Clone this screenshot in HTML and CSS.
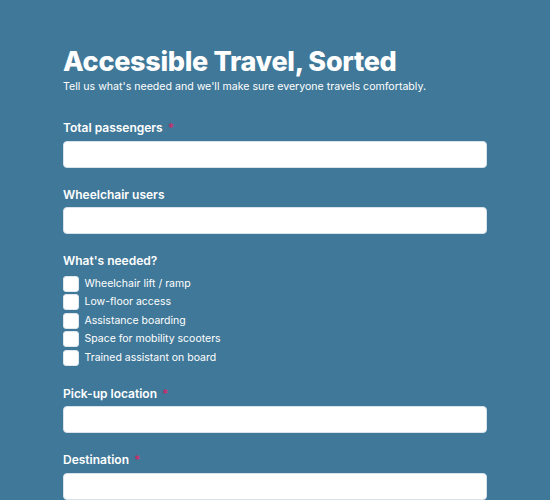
FILE: index.html
```html
<!DOCTYPE html>
<html lang="en">
<head>
<meta charset="utf-8">
<title>Accessible Travel, Sorted</title>
<link rel="stylesheet" href="styles.css">
</head>
<body>
<main class="page">
  <header class="intro">
    <h1 class="title">Accessible Travel, Sorted</h1>
    <p class="subtitle">Tell us what's needed and we'll make sure everyone travels comfortably.</p>
  </header>
  <form class="form">
    <div class="field">
      <label class="label" for="total">Total passengers <span class="req">*</span></label>
      <input class="input" id="total" type="text">
    </div>
    <div class="field">
      <label class="label" for="wheel">Wheelchair users</label>
      <input class="input" id="wheel" type="text">
    </div>
    <fieldset class="field group">
      <legend class="label">What's needed?</legend>
      <div class="checks">
        <label class="check"><span class="box"></span>Wheelchair lift / ramp</label>
        <label class="check"><span class="box"></span>Low-floor access</label>
        <label class="check"><span class="box"></span>Assistance boarding</label>
        <label class="check"><span class="box"></span>Space for mobility scooters</label>
        <label class="check"><span class="box"></span>Trained assistant on board</label>
      </div>
    </fieldset>
    <div class="field">
      <label class="label" for="pickup">Pick-up location <span class="req">*</span></label>
      <input class="input" id="pickup" type="text">
    </div>
    <div class="field">
      <label class="label" for="dest">Destination <span class="req">*</span></label>
      <input class="input" id="dest" type="text">
    </div>
  </form>
</main>
</body>
</html>
```
FILE: styles.css
```css
html, body {
  margin: 0;
  padding: 0;
  background: #3f7898;
}
body {
  font-family: Inter, "Noto Sans", sans-serif;
  color: #ffffff;
}
.page {
  width: 424px;
  margin: 0 auto;
  padding-top: 45px;
}
.intro {
  margin-bottom: 24px;
}
.title {
  margin: 0;
  font-size: 27px;
  font-weight: 800;
  line-height: 34px;
  letter-spacing: -0.3px;
}
.subtitle {
  margin: 0;
  font-size: 10.6px;
  line-height: 16px;
}
.form {
  display: flex;
  flex-direction: column;
  gap: 18px;
}
.field {
  display: flex;
  flex-direction: column;
  gap: 4px;
  margin: 0;
  padding: 0;
  border: 0;
  min-width: 0;
}
.label {
  padding: 0;
  font-size: 12px;
  font-weight: 600;
  line-height: 17.5px;
}
.req {
  color: #c92b6b;
  margin-left: 2px;
}
.input {
  box-sizing: border-box;
  width: 100%;
  height: 27px;
  margin: 0;
  border: 1px solid #d8e2ea;
  border-radius: 4px;
  background: #ffffff;
  font: inherit;
  font-size: 12px;
  padding: 0 8px;
}
.group .checks {
  display: flex;
  flex-direction: column;
  gap: 2.5px;
  margin-top: 6px;
  margin-bottom: 1px;
}
.check {
  display: flex;
  align-items: center;
  gap: 6px;
  font-size: 10.5px;
  line-height: 16px;
}
.box {
  box-sizing: border-box;
  width: 16px;
  height: 16px;
  margin-left: -0.5px;
  border-radius: 3px;
  background: #ffffff;
  border: 1px solid #dfe6ec;
  flex: none;
}
```
